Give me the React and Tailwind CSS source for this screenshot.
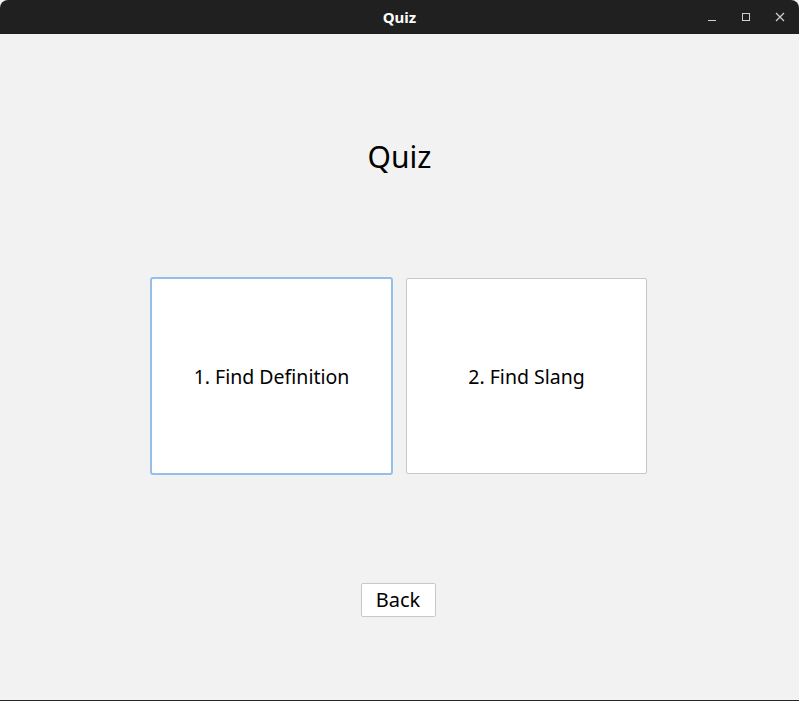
import React from "react";

export default function App() {
  return (
    <div className="w-[799px] h-[701px] flex flex-col bg-[#f2f2f2] overflow-hidden" style={{ fontFamily: '"Noto Sans", sans-serif' }}>
      <div className="h-[34px] shrink-0 bg-[#202020] rounded-t-[8px] relative flex items-center justify-center">
        <span className="text-white font-bold text-[15px] leading-none">Quiz</span>
        <div className="absolute right-0 top-0 h-full flex items-center">
          <div className="w-[34px] h-full flex items-center justify-center">
            <svg width="10" height="10" viewBox="0 0 10 10"><line x1="1" y1="8.5" x2="9" y2="8.5" stroke="#d0d0d0" strokeWidth="1" /></svg>
          </div>
          <div className="w-[34px] h-full flex items-center justify-center">
            <svg width="10" height="10" viewBox="0 0 10 10"><rect x="1.5" y="1.5" width="7" height="7" fill="none" stroke="#d0d0d0" strokeWidth="1" /></svg>
          </div>
          <div className="w-[34px] h-full flex items-center justify-center mr-[2px]">
            <svg width="10" height="10" viewBox="0 0 10 10"><path d="M1 1L9 9M9 1L1 9" stroke="#d0d0d0" strokeWidth="1.2" /></svg>
          </div>
        </div>
      </div>
      <div className="flex-1 flex flex-col items-center">
        <div className="mt-[102px] text-[30px] leading-[42px] text-black">Quiz</div>
        <div className="mt-[99px] flex gap-[13px] ml-[-2px]">
          <button className="w-[243px] h-[198px] bg-white border-2 border-[#93bfe8] rounded-[3px] text-[19.5px] text-black flex items-center justify-center pt-[2px]">
            1. Find Definition
          </button>
          <button className="w-[241px] h-[196px] mt-[1px] bg-white border border-[#c8c8c8] rounded-[2px] text-[19.5px] text-black flex items-center justify-center pt-[2px]">
            2. Find Slang
          </button>
        </div>
        <button className="mt-[108px] w-[75px] h-[34px] bg-white border border-[#c8c8c8] rounded-[2px] text-[20px] text-black flex items-center justify-center ml-[-3px]">
          Back
        </button>
      </div>
      <div className="h-px shrink-0 bg-[#2a2520]" />
    </div>
  );
}
